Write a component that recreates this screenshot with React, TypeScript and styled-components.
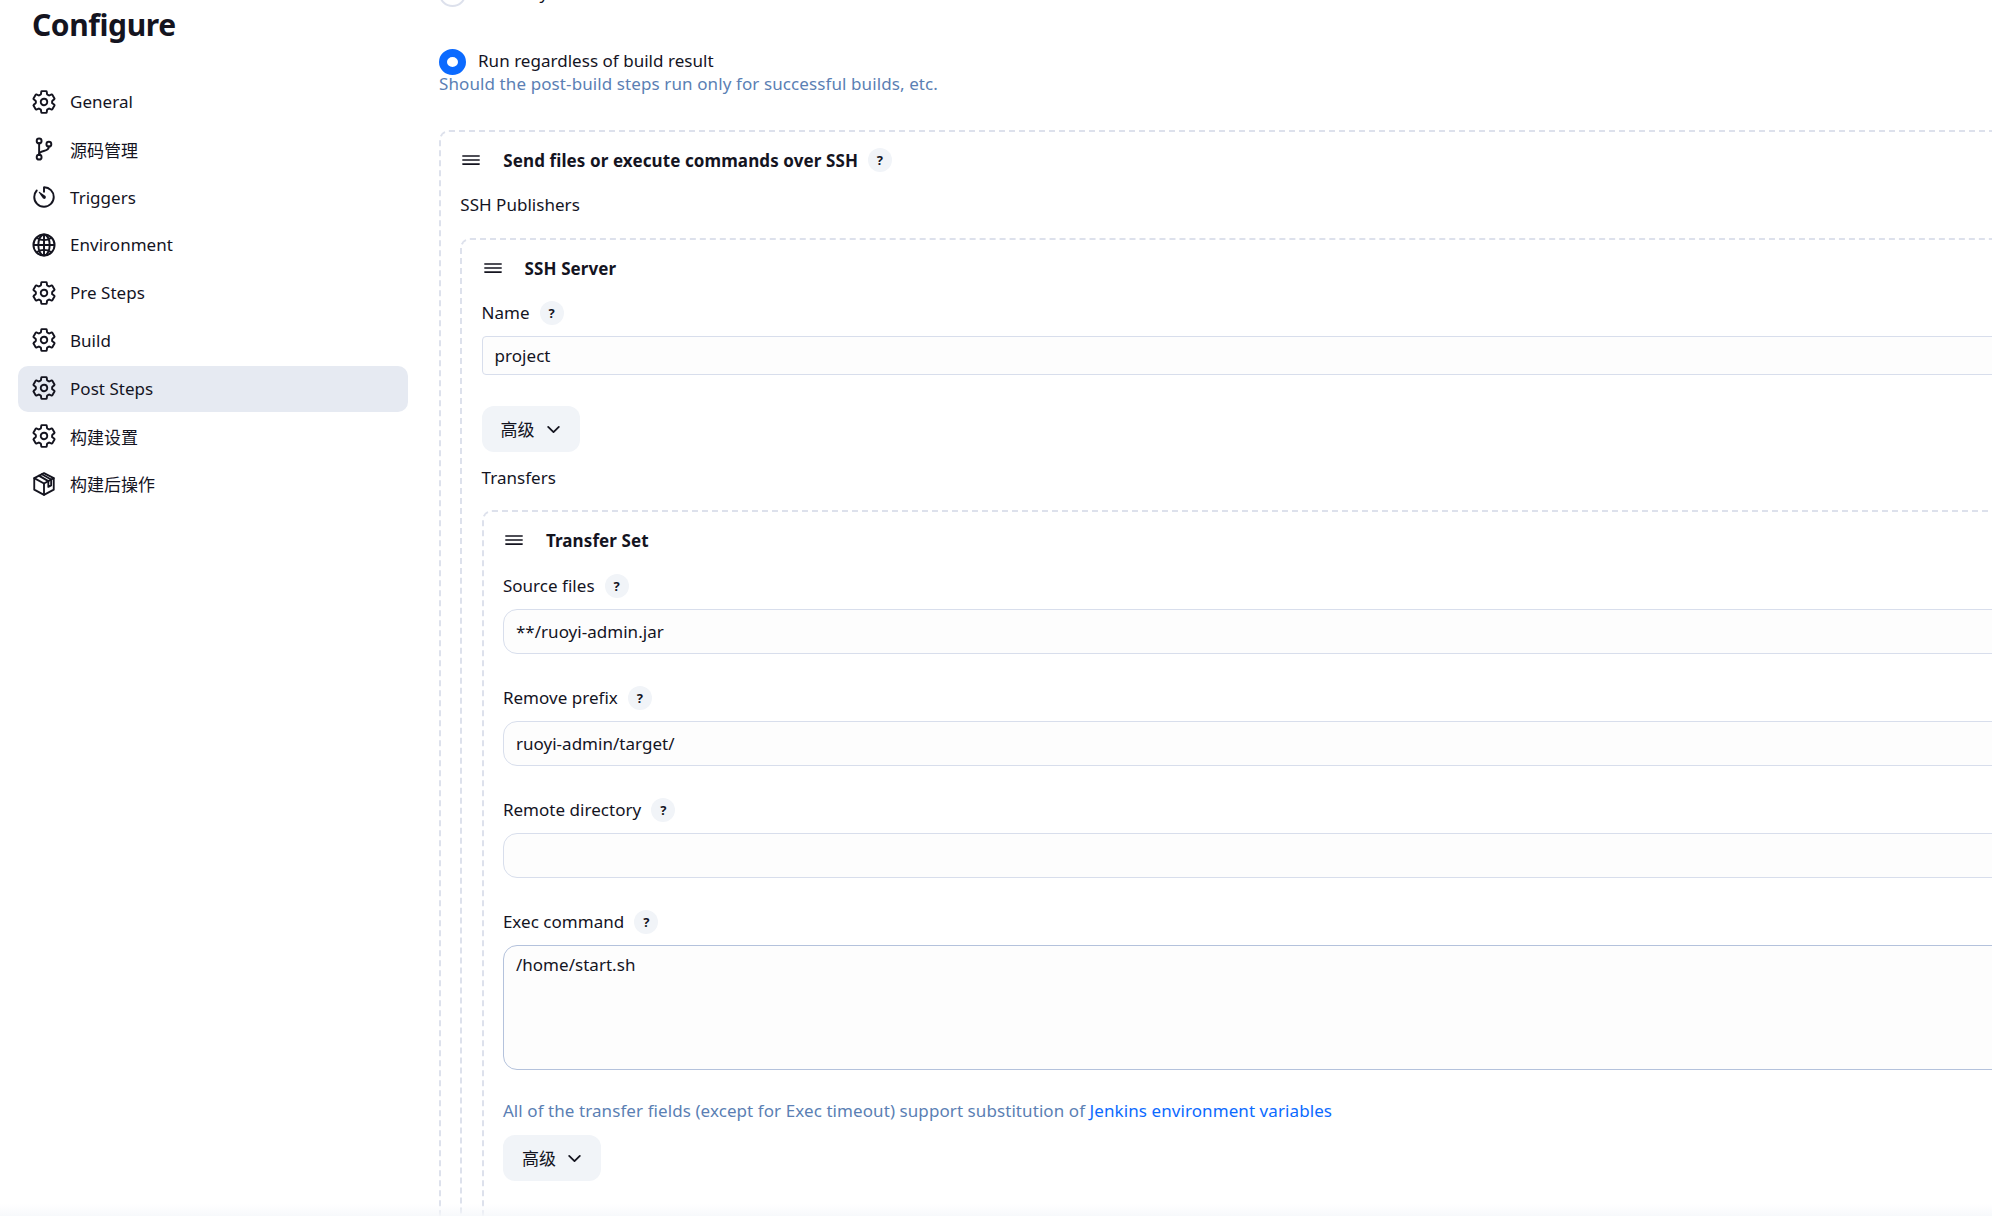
import styled, { createGlobalStyle } from "styled-components";
import {
  IoChevronDown,
  IoGitBranchOutline,
  IoGlobeOutline,
  IoReorderThreeOutline,
  IoSettingsOutline,
  IoTimerOutline,
} from "react-icons/io5";

const GlobalStyle = createGlobalStyle`
  html, body {
    margin: 0;
    height: 100%;
    overflow: hidden;
    background: #fff;
  }
  body {
    font-family: "Noto Sans", "Noto Sans CJK SC", sans-serif;
    font-size: 17px;
    letter-spacing: 0.03px;
    color: #14141f;
  }
  * { box-sizing: border-box; }
`;

const Page = styled.div`
  position: relative;
  display: flex;
  width: 1992px;
  height: 1216px;
  overflow: hidden;
`;

const BottomFade = styled.div`
  position: absolute;
  left: 0;
  right: 0;
  bottom: 0;
  height: 12px;
  background: linear-gradient(to bottom, rgba(246, 248, 251, 0), rgba(246, 248, 251, 0.9));
  pointer-events: none;
`;

const Sidebar = styled.aside`
  flex: 0 0 439px;
  padding: 0 31px 0 18px;
`;

const Title = styled.h1`
  margin: 5px 0 0 14px;
  font-size: 30px;
  line-height: 40px;
  font-weight: 700;
  letter-spacing: -0.4px;
`;

const Nav = styled.nav`
  display: flex;
  flex-direction: column;
  margin-top: 34px;
`;

const NavItem = styled.div<{ $active?: boolean }>`
  display: flex;
  align-items: center;
  gap: 13px;
  height: 46px;
  margin-bottom: 1.8px;
  padding: 0 0 1px 13px;
  border-radius: 10px;
  background: ${(props) => (props.$active ? "#e6eaf2" : "transparent")};

  svg {
    width: 26px;
    height: 26px;
    flex: none;
  }
  svg [stroke-width] {
    stroke-width: 38px;
  }
`;

const Main = styled.main`
  flex: 0 0 1640px;
  margin-top: -19px;
`;

const RadioRow = styled.label<{ $gap?: number }>`
  display: flex;
  align-items: center;
  gap: 12px;
  height: 26px;
  margin-bottom: ${(props) => props.$gap ?? 0}px;
`;

const RadioText = styled.span`
  margin-top: -3px;
`;

const Radio = styled.span<{ $checked?: boolean }>`
  flex: none;
  width: 27px;
  height: 26px;
  border-radius: 50%;
  border: ${(props) => (props.$checked ? "8px solid #0b6aff" : "2px solid #dde1ec")};
  background: #fff;
`;

const Help = styled.div`
  color: #5b7fb4;
  line-height: 18px;
  letter-spacing: 0.1px;
`;

const DashedBox = styled.section<{ $top?: number }>`
  margin-top: ${(props) => props.$top ?? 0}px;
  padding: 0 19.3px 60px;
  border: 2px dashed #dde1ec;
  border-radius: 10px;
`;

const BoxHeader = styled.div`
  display: flex;
  align-items: center;
  height: 26px;
  margin-top: 15px;
  font-weight: 700;
  letter-spacing: 0.1px;

  svg {
    width: 26px;
    height: 26px;
    margin: 0 19px 0 -2px;
  }
`;

const Caption = styled.div<{ $top: number }>`
  margin-top: ${(props) => props.$top}px;
  line-height: 24px;
`;

const LabelRow = styled.div<{ $top: number }>`
  display: flex;
  align-items: center;
  gap: 10px;
  height: 24px;
  margin-top: ${(props) => props.$top}px;
`;

const LabelText = styled.span`
  margin-top: -1px;
`;

const HelpBadge = styled.span<{ $left?: number }>`
  display: inline-flex;
  align-items: center;
  justify-content: center;
  width: 24px;
  height: 24px;
  margin-left: ${(props) => props.$left ?? 0}px;
  border-radius: 50%;
  background: #f1f4f8;
  font-size: 13px;
  font-weight: 700;
`;

const Input = styled.div<{ $height: number; $radius: number; $dark?: boolean }>`
  height: ${(props) => props.$height}px;
  margin-top: 11px;
  padding: ${(props) => (props.$dark ? "7px 12px" : "0 12px 1px")};
  display: flex;
  align-items: ${(props) => (props.$dark ? "flex-start" : "center")};
  background: #fdfdfd;
  border: 1.5px solid ${(props) => (props.$dark ? "#b4c2dc" : "#d8deec")};
  border-radius: ${(props) => props.$radius}px;
`;

const AdvancedButton = styled.div<{ $top: number }>`
  display: flex;
  align-items: center;
  gap: 9px;
  width: 98px;
  height: 46px;
  margin-top: ${(props) => props.$top}px;
  padding-left: 19px;
  border-radius: 12px;
  background: #f1f4f8;

  svg {
    width: 19px;
    height: 19px;
  }
`;

const AdvancedText = styled.span`
  margin-top: -1px;
`;

const Note = styled.div`
  margin-top: 30px;
  color: #5b7fb4;
  line-height: 22px;
  letter-spacing: 0.08px;
`;

const NoteLink = styled.a`
  color: #0b6aff;
`;

function PackageIcon() {
  return (
    <svg viewBox="0 0 24 24" fill="none" stroke="currentColor" strokeWidth="1.7" strokeLinejoin="round" strokeLinecap="round">
      <path d="M12 2 3 6.6v10.6L12 22l9-4.8V6.6L12 2Z" />
      <path d="M3 6.6 12 11.6l9-5" />
      <path d="M12 11.6V22" />
      <path d="M7.2 4.3 16 9.3v5.4l2.6-1.4V7.9L9.9 3" />
    </svg>
  );
}

const navItems = [
  { label: "General", icon: <IoSettingsOutline /> },
  { label: "源码管理", icon: <IoGitBranchOutline /> },
  { label: "Triggers", icon: <IoTimerOutline /> },
  { label: "Environment", icon: <IoGlobeOutline /> },
  { label: "Pre Steps", icon: <IoSettingsOutline /> },
  { label: "Build", icon: <IoSettingsOutline /> },
  { label: "Post Steps", icon: <IoSettingsOutline />, active: true },
  { label: "构建设置", icon: <IoSettingsOutline /> },
  { label: "构建后操作", icon: <PackageIcon /> },
];

function Label({ text, top }: { text: string; top: number }) {
  return (
    <LabelRow $top={top}>
      <LabelText>{text}</LabelText>
      <HelpBadge>?</HelpBadge>
    </LabelRow>
  );
}

function Advanced({ top }: { top: number }) {
  return (
    <AdvancedButton $top={top}>
      <AdvancedText>高级</AdvancedText>
      <IoChevronDown />
    </AdvancedButton>
  );
}

export default function App() {
  return (
    <Page>
      <GlobalStyle />
      <Sidebar>
        <Title>Configure</Title>
        <Nav>
          {navItems.map((item) => (
            <NavItem key={item.label} $active={item.active}>
              {item.icon}
              {item.label}
            </NavItem>
          ))}
        </Nav>
      </Sidebar>
      <Main>
        <RadioRow $gap={42}>
          <Radio />
          <RadioText>Run only if build succeeds or is unstable</RadioText>
        </RadioRow>
        <RadioRow>
          <Radio $checked />
          <RadioText>Run regardless of build result</RadioText>
        </RadioRow>
        <Help>Should the post-build steps run only for successful builds, etc.</Help>

        <DashedBox $top={37}>
          <BoxHeader>
            <IoReorderThreeOutline />
            Send files or execute commands over SSH
            <HelpBadge $left={10}>?</HelpBadge>
          </BoxHeader>
          <Caption $top={20}>SSH Publishers</Caption>
          <DashedBox $top={21}>
            <BoxHeader>
              <IoReorderThreeOutline />
              SSH Server
            </BoxHeader>
            <Label text="Name" top={20} />
            <Input $height={39} $radius={4}>project</Input>
            <Advanced top={31} />
            <Caption $top={14}>Transfers</Caption>
            <DashedBox $top={20}>
              <BoxHeader>
                <IoReorderThreeOutline />
                Transfer Set
              </BoxHeader>
              <Label text="Source files" top={21} />
              <Input $height={45} $radius={14}>**/ruoyi-admin.jar</Input>
              <Label text="Remove prefix" top={32} />
              <Input $height={45} $radius={14}>ruoyi-admin/target/</Input>
              <Label text="Remote directory" top={32} />
              <Input $height={45} $radius={14} />
              <Label text="Exec command" top={32} />
              <Input $height={125} $radius={14} $dark>/home/start.sh</Input>
              <Note>
                All of the transfer fields (except for Exec timeout) support substitution of{" "}
                <NoteLink>Jenkins environment variables</NoteLink>
              </Note>
              <Advanced top={13} />
            </DashedBox>
          </DashedBox>
        </DashedBox>
      </Main>
      <BottomFade />
    </Page>
  );
}
